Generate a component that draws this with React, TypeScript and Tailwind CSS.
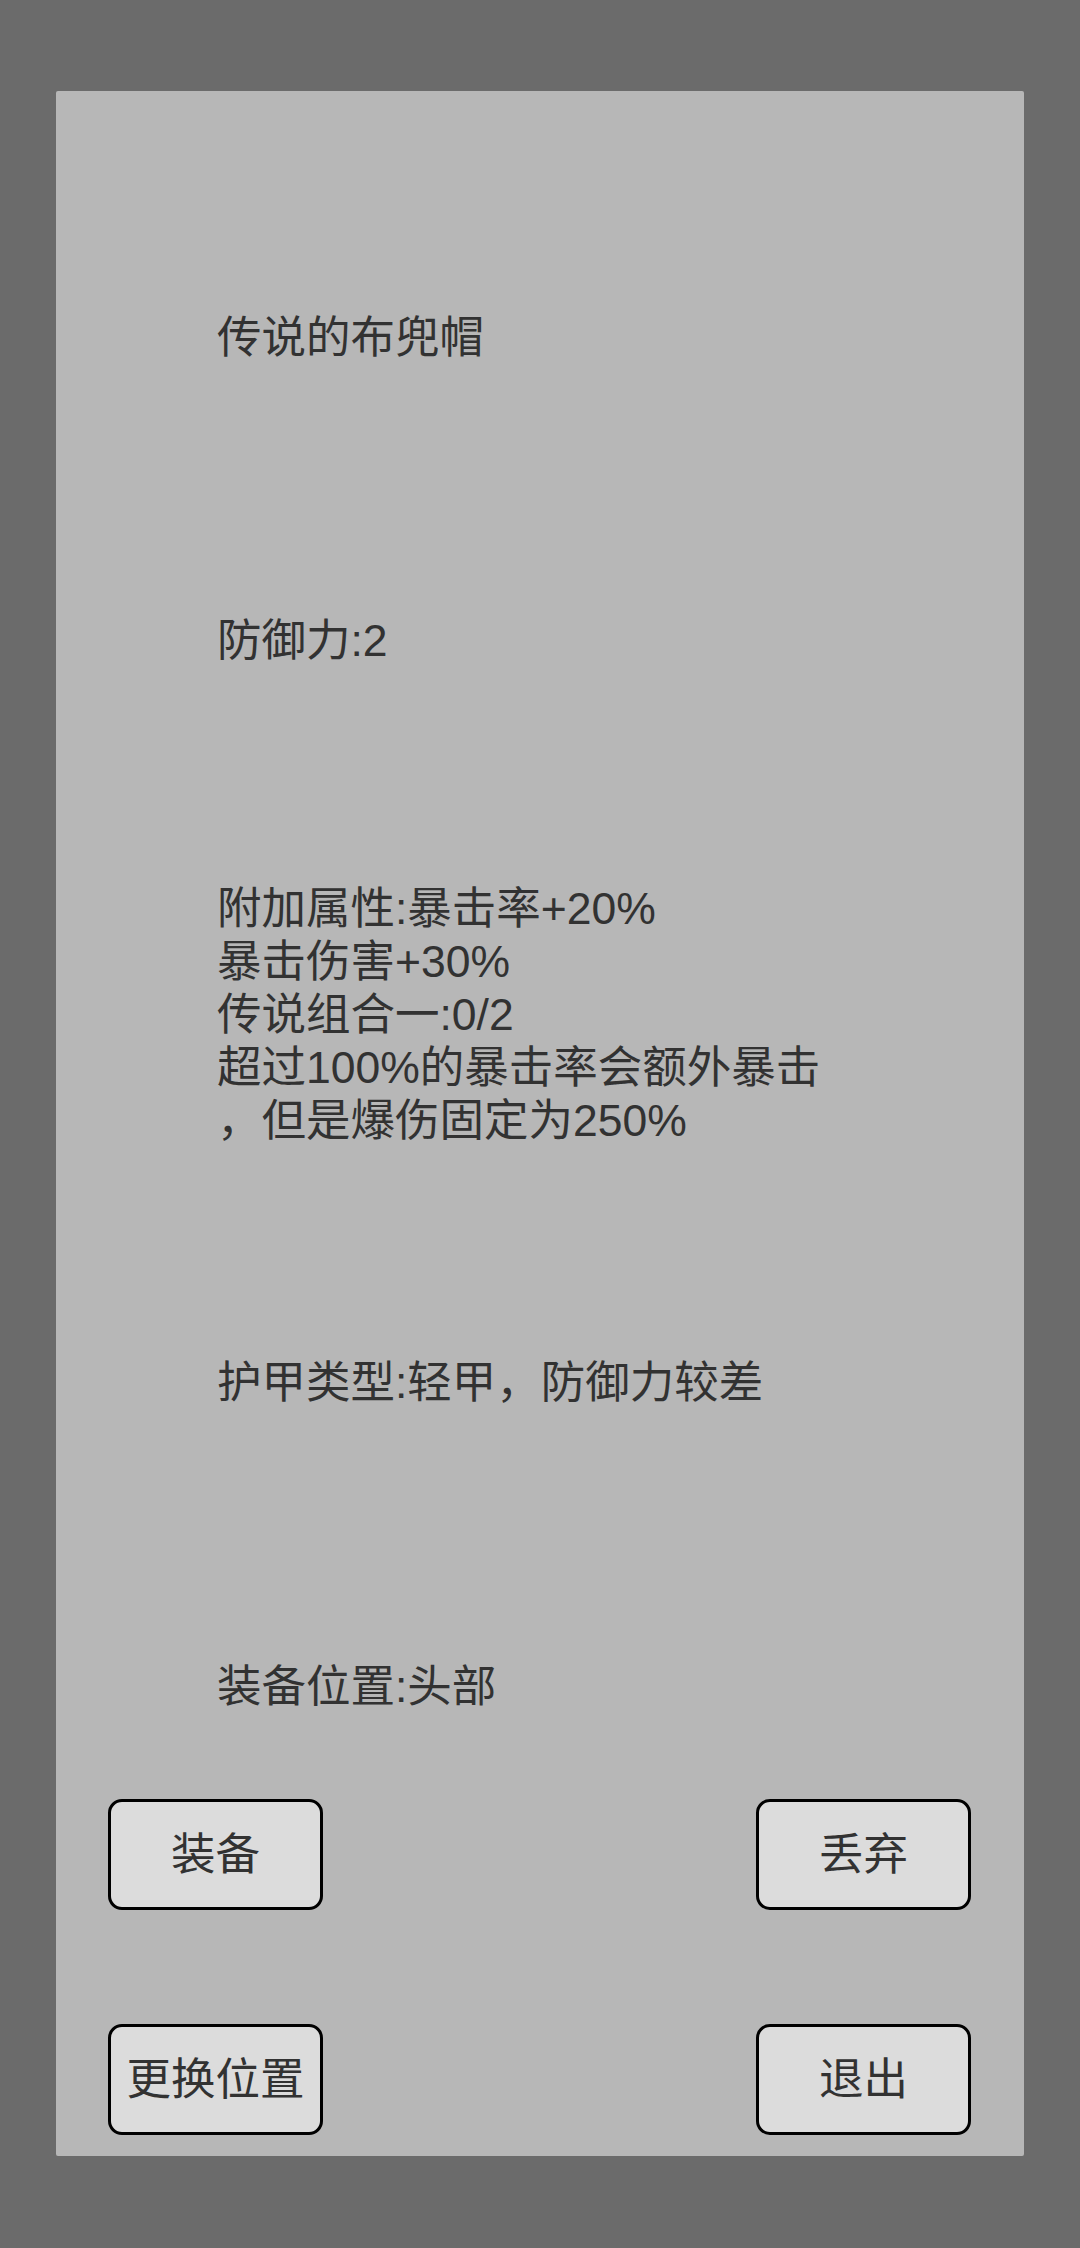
const lines = ["附加属性:暴击率+20%", "暴击伤害+30%", "传说组合一:0/2", "超过100%的暴击率会额外暴击", "，但是爆伤固定为250%"];

function Btn({ label }: { label: string }) {
  return (
    <button className="flex h-[111px] w-[215px] items-center justify-center rounded-[14px] border-[3px] border-black bg-[#dcdcdc] text-[44.5px] leading-[53px] text-[#323232]">
      {label}
    </button>
  );
}

export default function App() {
  return (
    <div
      className="h-[2248px] w-[1080px] bg-[#6b6b6b] px-[56px] pt-[91px]"
      style={{ fontFamily: '"Liberation Sans", "Noto Sans CJK SC", sans-serif' }}
    >
      <div className="flex h-[2065px] flex-col rounded-[2px] bg-[#b7b7b7] pt-[220px]">
        <div className="pl-[161px] text-[44.5px] leading-[53px] text-[#323232]">
          <p>传说的布兜帽</p>
          <p className="mt-[250px]">防御力:2</p>
          <div className="mt-[215px]">
            {lines.map((l) => (
              <p key={l}>{l}</p>
            ))}
          </div>
          <p className="mt-[209px]">护甲类型:轻甲，防御力较差</p>
          <p className="mt-[251px]">装备位置:头部</p>
        </div>
        <div className="mt-[86px] flex justify-between pl-[52px] pr-[53px]">
          <Btn label="装备" />
          <Btn label="丢弃" />
        </div>
        <div className="mt-[114px] flex justify-between pl-[52px] pr-[53px]">
          <Btn label="更换位置" />
          <Btn label="退出" />
        </div>
      </div>
    </div>
  );
}
